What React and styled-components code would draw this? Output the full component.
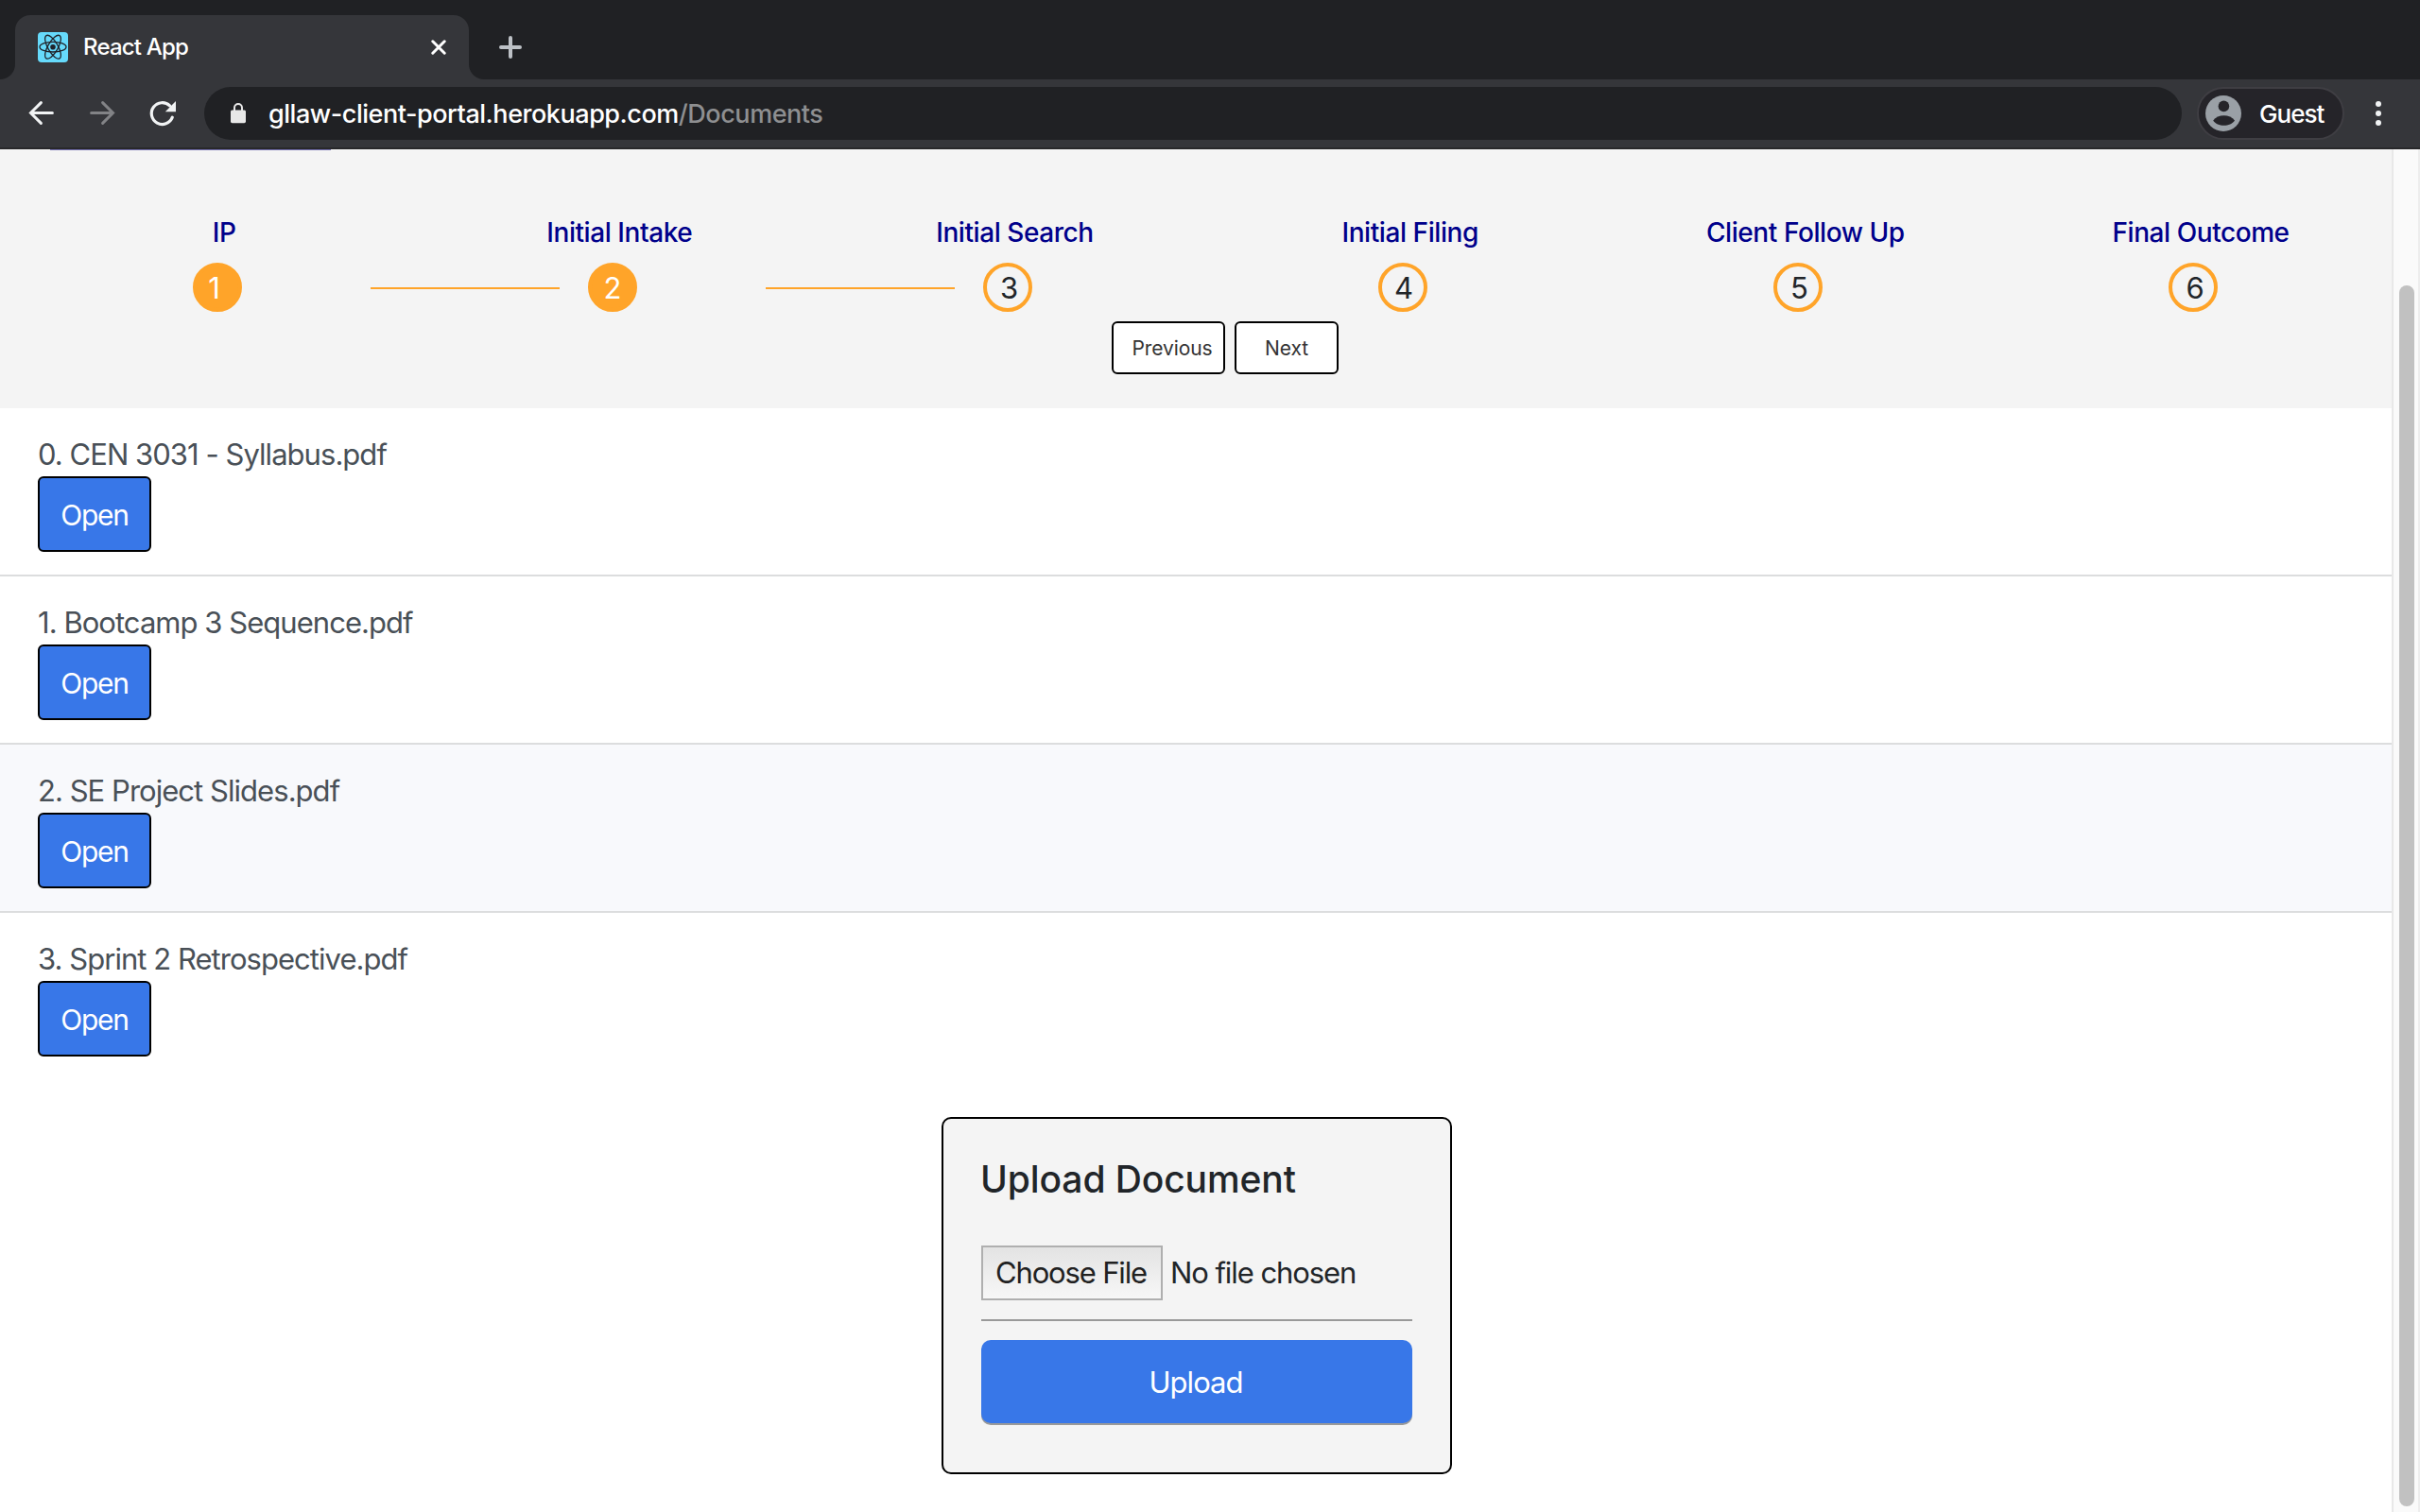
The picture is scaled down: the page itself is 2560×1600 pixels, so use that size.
import React from "react";
import styled, { createGlobalStyle } from "styled-components";

const GlobalStyle = createGlobalStyle`
  *, *::before, *::after { box-sizing: border-box; }
  body {
    margin: 0;
    overflow: hidden;
    background: #fff;
    color: #212529;
    font-family: Inter, "Liberation Sans", sans-serif;
  }
  button { font-family: inherit; margin: 0; }
`;

const Window = styled.div`
  display: flex;
  flex-direction: column;
  width: 2560px;
  height: 1600px;
  overflow: hidden;
`;

/* ---------- browser chrome ---------- */

const TabStrip = styled.div`
  display: flex;
  align-items: flex-end;
  height: 84px;
  flex: none;
  background: #202124;
`;

const TabFlare = styled.div`
  width: 16px;
  height: 16px;
  background: radial-gradient(
    circle at ${(p) => (p.$side === "left" ? "0 0" : "100% 0")},
    #202124 15.5px,
    #35363a 16.5px
  );
`;

const Tab = styled.div`
  display: flex;
  align-items: center;
  width: 480px;
  height: 68px;
  padding: 0 24px;
  border-radius: 16px 16px 0 0;
  background: #35363a;
`;

const TabTitle = styled.span`
  flex: 1;
  padding-left: 16px;
  color: #fff;
  font-size: 24px;
  font-weight: 500;
  letter-spacing: -0.82px;
  line-height: 32px;
`;

const NewTab = styled.div`
  display: flex;
  align-self: flex-start;
  padding: 38px 0 0 16px;
`;

const Toolbar = styled.div`
  display: flex;
  align-items: center;
  height: 74px;
  flex: none;
  padding: 0 28px;
  border-bottom: 2px solid #28282a;
  background: #35363a;
`;

const NavIcons = styled.div`
  display: flex;
  gap: 32px;
  width: 188px;
`;

const AddressBar = styled.div`
  display: flex;
  align-items: center;
  width: 2092px;
  height: 56px;
  padding-left: 28px;
  border-radius: 28px;
  background: #202124;
`;

const Url = styled.div`
  padding: 2px 0 0 24px;
  color: #fff;
  font-size: 27px;
  font-weight: 500;
  letter-spacing: -0.46px;
  line-height: 36px;
  white-space: nowrap;
`;

const UrlPath = styled.span`
  color: #8e8f91;
`;

const Profile = styled.div`
  display: flex;
  align-items: center;
  gap: 19px;
  width: 156px;
  height: 56px;
  margin-left: 16px;
  padding-left: 7px;
  border: 2px solid #3f3e43;
  border-radius: 28px;
  background: #252429;
  color: #fff;
  font-size: 26px;
  font-weight: 500;
  letter-spacing: -0.95px;
`;

const MenuSlot = styled.div`
  display: flex;
  margin-left: 33px;
`;

/* ---------- page ---------- */

const Viewport = styled.div`
  display: flex;
  flex: 1;
  min-height: 0;
`;

const Page = styled.main`
  flex: 1;
  min-width: 0;
  display: flex;
  flex-direction: column;
  background: #fff;
`;

const ScrollTrack = styled.div`
  width: 30px;
  flex: none;
  padding: 144px 4px 6px 6px;
  border-left: 2px solid #e8e8e8;
  border-right: 2px solid #ededed;
  background: #fafafa;
`;

const ScrollThumb = styled.div`
  height: 100%;
  border-radius: 8px;
  background: #c1c1c1;
`;

const StepHeader = styled.section`
  display: flex;
  flex-direction: column;
  height: 274px;
  flex: none;
  background: #f4f4f4;
`;

const NavEdge = styled.div`
  width: 297px;
  height: 1px;
  margin-left: 53px;
  background: #746fb0;
`;

const StepLabels = styled.div`
  display: grid;
  grid-template-columns: repeat(6, 418.2px);
  margin: 66px 0 0 28px;
`;

const StepLabel = styled.div`
  color: #00008b;
  font-size: 28px;
  font-weight: 500;
  letter-spacing: -0.43px;
  line-height: 42px;
  text-align: center;
`;

const StepTrack = styled.div`
  display: flex;
  align-items: center;
  height: 52px;
  margin: 11px 0 0 204px;
`;

const StepCircle = styled.div`
  display: flex;
  align-items: center;
  justify-content: center;
  width: 52px;
  height: 52px;
  flex: none;
  padding: 1px ${(p) => (p.$shift < 0 ? -p.$shift : 0)}px 0 ${(p) => (p.$shift > 0 ? p.$shift : 0)}px;
  border: 4px solid #ffa429;
  border-radius: 50%;
  background: ${(p) => (p.$done ? "#ffa429" : "transparent")};
  color: ${(p) => (p.$done ? "#fff" : "#212529")};
  font-size: 31px;
  line-height: 40px;
`;

const StepLine = styled.div`
  width: 200px;
  height: 2px;
  flex: none;
  margin: 2px 30px 0 136px;
  background: ${(p) => (p.$done ? "#ffa429" : "transparent")};
`;

const StepButtons = styled.div`
  display: flex;
  gap: 10px;
  margin: 10px 0 0 1176px;
`;

const StepButton = styled.button`
  width: ${(p) => p.$width}px;
  height: 56px;
  padding: 0 0 0 ${(p) => p.$inset || 0}px;
  border: 2px solid #000;
  border-radius: 6px;
  background: #fff;
  color: #333;
  font-size: 21px;
  letter-spacing: -0.1px;
`;

const DocumentRow = styled.div`
  height: 178px;
  flex: none;
  padding: 26px 40px 0;
  border-bottom: 2px solid ${(p) => (p.$last ? "transparent" : "#dcddde")};
  background: ${(p) => (p.$hover ? "#f8f9fc" : "#fff")};
`;

const DocumentName = styled.div`
  color: #495057;
  font-size: 31px;
  letter-spacing: -0.96px;
  line-height: 46px;
`;

const OpenButton = styled.button`
  display: block;
  width: 120px;
  height: 80px;
  padding: 1px 0 0;
  border: 2px solid #000;
  border-radius: 6px;
  background: #3877e8;
  color: #fff;
  font-size: 30px;
  letter-spacing: -1.25px;
`;

const UploadCard = styled.section`
  width: 540px;
  height: 378px;
  margin: 38px 0 0 996px;
  padding: 40px 40px 0 39px;
  border: 2px solid #000;
  border-radius: 10px;
  background: #f4f4f4;
`;

const CardTitle = styled.h2`
  margin: 0;
  color: #212529;
  font-size: 39px;
  font-weight: 500;
  letter-spacing: -0.1px;
  line-height: 48px;
  white-space: nowrap;
`;

const FileInput = styled.div`
  display: flex;
  align-items: center;
  gap: 8px;
  height: 80px;
  margin: 46px 0 0 1px;
  padding-bottom: 20px;
  border-bottom: 2px solid #999;
`;

const ChooseFile = styled.button`
  width: 192px;
  height: 58px;
  padding: 0 2px 1px 0;
  border: 2px solid #afafaf;
  background: linear-gradient(#e3e3e3, #f7f7f7);
  color: #212121;
  font-size: 31px;
  letter-spacing: -1.15px;
  white-space: nowrap;
`;

const FileStatus = styled.span`
  padding-bottom: 1px;
  font-size: 31px;
  letter-spacing: -1.07px;
`;

const UploadButton = styled.button`
  display: block;
  width: 456px;
  height: 88px;
  margin: 20px 0 0 1px;
  padding: 0 2px 0 0;
  border: 0;
  border-radius: 10px;
  background: #3877e8;
  box-shadow: 0 2px #999;
  color: #fff;
  font-size: 31px;
  letter-spacing: -0.95px;
`;

/* ---------- drawings ---------- */

const ReactIcon = () => (
  <svg width="32" height="32" viewBox="0 0 32 32">
    <rect width="32" height="32" rx="4" fill="#66dafb" />
    <g fill="none" stroke="#20232a" strokeWidth="1.3">
      <ellipse cx="16" cy="15.7" rx="14" ry="5.3" />
      <ellipse cx="16" cy="15.7" rx="14" ry="5.3" transform="rotate(60 16 15.7)" />
      <ellipse cx="16" cy="15.7" rx="14" ry="5.3" transform="rotate(120 16 15.7)" />
    </g>
    <circle cx="16" cy="15.7" r="2.8" fill="#20232a" />
  </svg>
);

const CloseIcon = () => (
  <svg width="16" height="16" viewBox="0 0 16 16">
    <path d="M1.8 1.8 14.2 14.2M14.2 1.8 1.8 14.2" stroke="#fff" strokeWidth="3" strokeLinecap="round" />
  </svg>
);

const PlusIcon = () => (
  <svg width="24" height="24" viewBox="0 0 24 24">
    <path d="M12 2V22M2 12H22" stroke="#bdc1c6" strokeWidth="4" strokeLinecap="round" />
  </svg>
);

const BackIcon = () => (
  <svg width="32" height="32" viewBox="0 0 32 32">
    <path
      d="M27.4 15.5H4.6M15.4 4.6 4.5 15.5 15.4 26.4"
      fill="none"
      stroke="#f1f3f4"
      strokeWidth="3"
      strokeLinecap="round"
    />
  </svg>
);

const ForwardIcon = () => (
  <svg width="32" height="32" viewBox="0 0 32 32">
    <path
      d="M4.6 15.5H27.4M16.6 4.6 27.5 15.5 16.6 26.4"
      fill="none"
      stroke="#828386"
      strokeWidth="3"
      strokeLinecap="round"
    />
  </svg>
);

const ReloadIcon = () => (
  <svg width="32" height="32" viewBox="0 0 32 32">
    <path
      d="M26.3 20.2A11.4 11.4 0 1 1 23.6 7.9"
      fill="none"
      stroke="#f1f3f4"
      strokeWidth="3.2"
      strokeLinecap="round"
    />
    <path d="M30 3V14.2H18.8Z" fill="#f1f3f4" />
  </svg>
);

const LockIcon = () => (
  <svg width="16" height="22" viewBox="0 0 16 22">
    <rect y="7.4" width="16" height="13.8" rx="1.6" fill="#e8e8e8" />
    <path d="M4 8V5a4 4 0 0 1 8 0V8" fill="none" stroke="#e8e8e8" strokeWidth="2" />
  </svg>
);

const AvatarIcon = () => (
  <svg width="38" height="38" viewBox="0 0 38 38">
    <circle cx="19" cy="19" r="19" fill="#9aa0a6" />
    <circle cx="19.4" cy="11.4" r="5.8" fill="#252429" />
    <path d="M8.2 26.6C13 19.4 26 19.4 31 26.6 26.5 33.6 12.5 33.6 8.2 26.6Z" fill="#252429" />
  </svg>
);

const MenuIcon = () => (
  <svg width="6" height="28" viewBox="0 0 6 28">
    {[4, 14, 24].map((y) => (
      <circle key={y} cx="3" cy={y} r="3" fill="#f1f3f4" />
    ))}
  </svg>
);

/* ---------- data ---------- */

const steps = [
  { name: "IP", done: true, shift: -7 },
  { name: "Initial Intake", done: true, shift: 0 },
  { name: "Initial Search", shift: 3 },
  { name: "Initial Filing", shift: 2 },
  { name: "Client Follow Up", shift: 3 },
  { name: "Final Outcome", shift: 4 },
];

const documents = [
  { name: "CEN 3031 - Syllabus.pdf" },
  { name: "Bootcamp 3 Sequence.pdf" },
  { name: "SE Project Slides.pdf", hover: true },
  { name: "Sprint 2 Retrospective.pdf" },
];

export default function App() {
  return (
    <Window>
      <GlobalStyle />
      <TabStrip>
        <TabFlare $side="left" />
        <Tab>
          <ReactIcon />
          <TabTitle>React App</TabTitle>
          <CloseIcon />
        </Tab>
        <TabFlare $side="right" />
        <NewTab>
          <PlusIcon />
        </NewTab>
      </TabStrip>

      <Toolbar>
        <NavIcons>
          <BackIcon />
          <ForwardIcon />
          <ReloadIcon />
        </NavIcons>
        <AddressBar>
          <LockIcon />
          <Url>
            gllaw-client-portal.herokuapp.com<UrlPath>/Documents</UrlPath>
          </Url>
        </AddressBar>
        <Profile>
          <AvatarIcon />
          Guest
        </Profile>
        <MenuSlot>
          <MenuIcon />
        </MenuSlot>
      </Toolbar>

      <Viewport>
        <Page>
          <StepHeader>
            <NavEdge />
            <StepLabels>
              {steps.map((s) => (
                <StepLabel key={s.name}>{s.name}</StepLabel>
              ))}
            </StepLabels>
            <StepTrack>
              {steps.map((s, i) => (
                <React.Fragment key={s.name}>
                  <StepCircle $done={s.done} $shift={s.shift}>
                    {i + 1}
                  </StepCircle>
                  {i < steps.length - 1 && <StepLine $done={s.done} />}
                </React.Fragment>
              ))}
            </StepTrack>
            <StepButtons>
              <StepButton $width={120} $inset={8}>Previous</StepButton>
              <StepButton $width={110}>Next</StepButton>
            </StepButtons>
          </StepHeader>

          {documents.map((d, i) => (
            <DocumentRow key={d.name} $hover={d.hover} $last={i === documents.length - 1}>
              <DocumentName>
                {i}. {d.name}
              </DocumentName>
              <OpenButton>Open</OpenButton>
            </DocumentRow>
          ))}

          <UploadCard>
            <CardTitle>Upload Document</CardTitle>
            <FileInput>
              <ChooseFile>Choose File</ChooseFile>
              <FileStatus>No file chosen</FileStatus>
            </FileInput>
            <UploadButton>Upload</UploadButton>
          </UploadCard>
        </Page>
        <ScrollTrack>
          <ScrollThumb />
        </ScrollTrack>
      </Viewport>
    </Window>
  );
}
